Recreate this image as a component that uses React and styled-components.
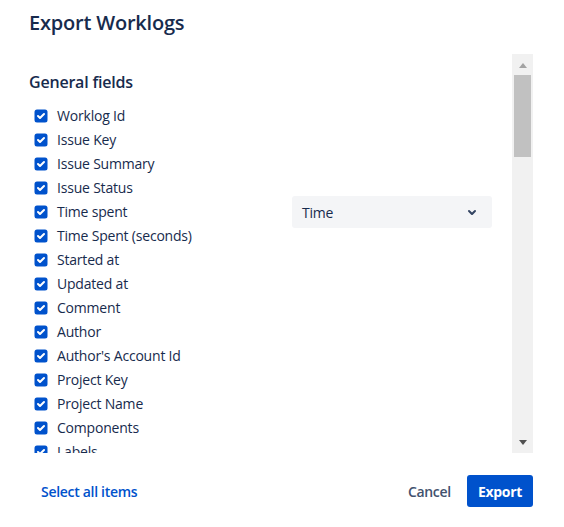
import React from 'react';
import styled, { createGlobalStyle } from 'styled-components';

const GlobalStyle = createGlobalStyle`
  body {
    margin: 0;
    background: #fff;
    font-family: "Open Sans", "Noto Sans", sans-serif;
    color: #172B4D;
    letter-spacing: -0.2px;
  }
`;

const generalFields = [
  'Worklog Id', 'Issue Key', 'Issue Summary', 'Issue Status', 'Time spent',
  'Time Spent (seconds)', 'Started at', 'Updated at', 'Comment', 'Author',
  "Author's Account Id", 'Project Key', 'Project Name', 'Components', 'Labels',
  'Fix Versions', 'Affects Versions', 'Priority', 'Issue Type', 'Parent Key',
];

const Checkbox = () => (
  <svg width="24" height="24" viewBox="0 0 24 24">
    <rect x="5.5" y="5.5" width="13" height="13" rx="2.5" fill="#0052CC" />
    <path
      fill="#fff"
      d="M9.707 11.293a1 1 0 1 0-1.414 1.414l2 2a1 1 0 0 0 1.414 0l4-4a1 1 0 1 0-1.414-1.414L11 12.586l-1.293-1.293z"
    />
  </svg>
);

const FieldRow = ({ name, children }) => (
  <Row>
    <Label>
      <Checkbox />
      <span>{name}</span>
    </Label>
    {children}
  </Row>
);

const App = () => (
  <Dialog>
    <GlobalStyle />
    <Title>Export Worklogs</Title>
    <Body>
      <List>
        <SectionTitle>General fields</SectionTitle>
        {generalFields.map((f) => (
          <FieldRow key={f} name={f}>
            {f === 'Time spent' && (
              <Select>
                <span>Time</span>
                <svg width="24" height="24" viewBox="0 0 24 24">
                  <path
                    fill="#344563"
                    d="M8.292 10.293a1.009 1.009 0 0 0 0 1.419l2.939 2.965c.218.215.5.322.779.322s.556-.107.769-.322l2.93-2.955a1.01 1.01 0 0 0 0-1.419.987.987 0 0 0-1.406 0l-2.298 2.317-2.307-2.327a.99.99 0 0 0-1.406 0z"
                  />
                </svg>
              </Select>
            )}
          </FieldRow>
        ))}
      </List>
      <ScrollBar>
        <Arrow $up />
        <Track>
          <Thumb />
        </Track>
        <Arrow />
      </ScrollBar>
    </Body>
    <Footer>
      <LinkButton>Select all items</LinkButton>
      <Actions>
        <Button>Cancel</Button>
        <Button $primary>Export</Button>
      </Actions>
    </Footer>
  </Dialog>
);

export default App;

const Dialog = styled.div`
  width: 564px;
  height: 527px;
  box-sizing: border-box;
  padding: 0 31px 0 29px;
  display: flex;
  flex-direction: column;
`;

const Title = styled.h1`
  margin: 0;
  height: 54px;
  display: flex;
  align-items: center;
  padding-bottom: 10px;
  box-sizing: border-box;
  font-size: 20px;
  font-weight: 600;
  color: #172B4D;
`;

const Body = styled.div`
  height: 399px;
  display: flex;
`;

const List = styled.div`
  flex: 1;
  overflow: hidden;
  padding-top: 18px;
`;

const ScrollBar = styled.div`
  width: 21px;
  display: flex;
  flex-direction: column;
  background: #F1F1F1;
`;

const Arrow = styled.div`
  height: 21px;
  display: flex;
  align-items: center;
  justify-content: center;

  &::after {
    content: '';
    border-left: 4.5px solid transparent;
    border-right: 4.5px solid transparent;
    ${(p) => (p.$up
    ? 'border-bottom: 5px solid #A3A3A3; margin-top: 1px;'
    : 'border-top: 5px solid #505050; margin-top: -1px;')}
  }
`;

const Track = styled.div`
  flex: 1;
  padding: 0 2px;
`;

const Thumb = styled.div`
  height: 82px;
  background: #C1C1C1;
`;

const SectionTitle = styled.h2`
  margin: 0 0 12px;
  font-size: 16px;
  line-height: 20px;
  font-weight: 600;
  color: #172B4D;
`;

const Row = styled.div`
  display: flex;
  align-items: center;
  height: 24px;
`;

const Label = styled.label`
  display: flex;
  align-items: center;
  gap: 4px;
  width: 263px;
  font-size: 14px;
  line-height: 20px;
  color: #172B4D;
`;

const Select = styled.div`
  display: flex;
  align-items: center;
  justify-content: space-between;
  width: 200px;
  height: 32px;
  box-sizing: border-box;
  padding: 0 8px 0 10px;
  background: #F4F5F7;
  border-radius: 3px;
  font-size: 14px;
  color: #172B4D;
`;

const Footer = styled.div`
  flex: 1;
  display: flex;
  align-items: center;
  justify-content: space-between;
  padding-top: 2px;
`;

const Actions = styled.div`
  display: flex;
  gap: 4px;
`;

const Button = styled.button`
  height: 32px;
  padding: 0 ${(p) => (p.$primary ? 11 : 12)}px;
  border: none;
  border-radius: 3px;
  font-family: inherit;
  letter-spacing: -0.3px;
  font-size: 14px;
  font-weight: ${(p) => (p.$primary ? 700 : 600)};
  background: ${(p) => (p.$primary ? '#0052CC' : 'transparent')};
  color: ${(p) => (p.$primary ? '#fff' : '#42526E')};
`;

const LinkButton = styled(Button)`
  color: #0052CC;
`;
